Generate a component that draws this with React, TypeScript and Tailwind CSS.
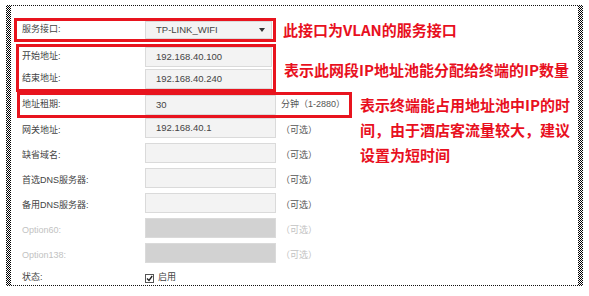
import type { ReactNode } from 'react'

const red = 'border-[#e8141e]'
const note = "text-[15px] font-bold text-[#e8101e] font-['Noto_Sans_CJK_SC',sans-serif] whitespace-nowrap"
const labelText = 'text-[9px] text-[#444] whitespace-nowrap'

function Input({ value, disabled, w = 'w-[131px]', h = 'h-[20px]', children }: {
  value?: string
  disabled?: boolean
  w?: string
  h?: string
  children?: ReactNode
}) {
  return (
    <div
      className={`${w} ${h} self-start flex items-center justify-between pl-[10px] pr-[6px] border border-[#dadada] text-[9.5px] text-[#444] ${
        disabled ? 'bg-[#d2d2d2]' : 'bg-[#f3f3f3]'
      }`}
    >
      <span>{value}</span>
      {children}
    </div>
  )
}

function Row({ label, value, faint, disabled }: { label: string; value?: string; faint?: boolean; disabled?: boolean }) {
  return (
    <div className="flex h-[25px] items-center">
      <span className={`w-[134px] pl-[11px] ${labelText} ${faint ? 'text-[#c2c2c2]' : ''}`}>{label}</span>
      <Input value={value} disabled={disabled} />
      <span className={`ml-[5px] text-[9px] ${faint ? 'text-[#c2c2c2]' : 'text-[#555]'}`}>（可选）</span>
    </div>
  )
}

export default function App() {
  return (
    <div className="w-[589px] h-[296px] bg-white pt-[5px] pl-[6px] font-['Liberation_Sans','Noto_Sans_CJK_SC',sans-serif]">
      <div className="w-[577px] h-[281px] px-[5px] bg-[repeating-conic-gradient(#000_0%_25%,#fff_0%_50%)] bg-[length:2px_2px]">
        <div className="h-full bg-white border-y border-dotted border-[#111] pt-[12px] overflow-hidden">
          {/* 服务接口 */}
          <div className="flex items-center">
            <div className={`ml-[3px] w-[262px] h-[24px] border-[3px] ${red} flex items-center`}>
              <span className={`w-[128px] pl-[5px] ${labelText}`}>服务接口:</span>
              <Input value="TP-LINK_WIFI" w="w-[127px]" h="h-[18px]">
                <span className="w-0 h-0 border-x-[3px] border-t-[4px] border-x-transparent border-t-[#333]" />
              </Input>
            </div>
            <span className={`ml-[7px] ${note} leading-[20px]`}>此接口为VLAN的服务接口</span>
          </div>

          {/* 地址池 */}
          <div className="flex items-start mt-[2px]">
            <div className={`ml-[5px] w-[260px] h-[48px] border-[3px] ${red} flex flex-col justify-between`}>
              <div className="flex items-center h-[20px]">
                <span className={`w-[126px] pl-[3px] ${labelText}`}>开始地址:</span>
                <Input value="192.168.40.100" w="w-[127px]" />
              </div>
              <div className="flex items-center h-[20px]">
                <span className={`w-[126px] pl-[3px] ${labelText}`}>结束地址:</span>
                <Input value="192.168.40.240" w="w-[127px]" />
              </div>
            </div>
            <span className={`ml-[8px] mt-[16px] ${note} leading-[20px]`}>表示此网段IP地址池能分配给终端的IP数量</span>
          </div>

          {/* 地址租期 + 其他 */}
          <div className="flex items-start">
            <div className="w-[341px] flex flex-col">
              <div className={`ml-[6px] w-[335px] h-[26px] border-[3px] ${red} flex items-center`}>
                <span className={`w-[125px] pl-[2px] ${labelText}`}>地址租期:</span>
                <Input value="30" />
                <span className="ml-[5px] text-[9px] text-[#555] whitespace-nowrap">分钟（1-2880）</span>
              </div>
              <Row label="网关地址:" value="192.168.40.1" />
              <Row label="缺省域名:" />
              <Row label="首选DNS服务器:" />
              <Row label="备用DNS服务器:" />
              <Row label="Option60:" faint disabled />
              <Row label="Option138:" faint disabled />
              <div className="flex h-[20px] items-center">
                <span className={`w-[134px] pl-[11px] ${labelText}`}>状态:</span>
                <span className="w-[9px] h-[9px] border border-[#555] bg-white flex items-center justify-center">
                  <svg width="7" height="7" viewBox="0 0 7 7">
                    <path d="M1 3.5 L3 5.5 L6.2 1" stroke="#222" strokeWidth="1.3" fill="none" />
                  </svg>
                </span>
                <span className="ml-[4px] text-[9px] text-[#444]">启用</span>
              </div>
            </div>
            <p className={`ml-[8px] ${note} leading-[25px]`}>
              表示终端能占用地址池中IP的时
              <br />
              间，由于酒店客流量较大，建议
              <br />
              设置为短时间
            </p>
          </div>
        </div>
      </div>
    </div>
  )
}
